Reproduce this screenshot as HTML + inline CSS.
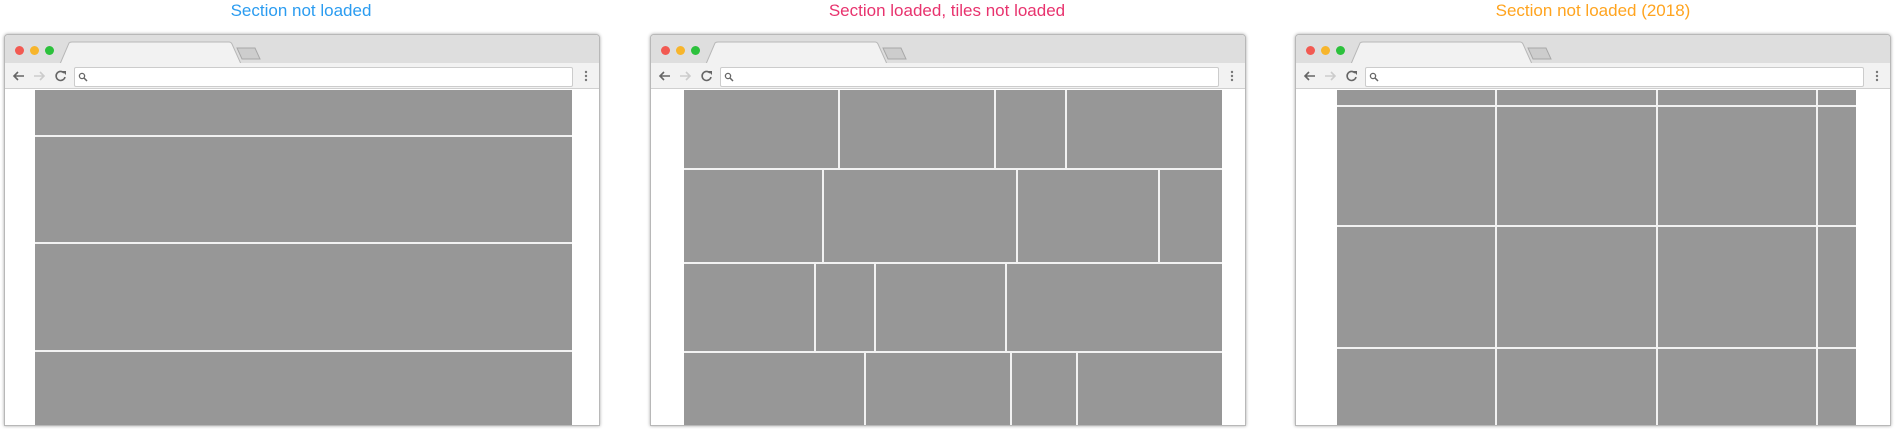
<!DOCTYPE html>
<html><head><meta charset="utf-8"><style>
body{margin:0;width:1896px;height:429px;background:#fff;position:relative;overflow:hidden;font-family:"Liberation Sans",sans-serif}
.t{position:absolute;top:0;font-size:17px;line-height:22px;text-align:center;width:400px}
.w{position:absolute;top:34px;width:594px;height:390px;border:1px solid #b8b8b8;border-radius:4px 4px 0 0;box-shadow:0 0 3px rgba(0,0,0,.35);background:#fff;overflow:hidden}
.tb{position:absolute;left:0;top:0;width:100%;height:28px;background:#dedede;border-bottom:1px solid #c6c6c6}
.tl{position:absolute;top:28px;left:0;width:100%;height:25px;background:#f2f2f2;border-bottom:1px solid #d0d0d0}
.url{position:absolute;left:69px;top:4px;width:497px;height:18px;background:#fff;border:1px solid #ccc;border-radius:2px}
.d{position:absolute;width:9px;height:9px;border-radius:50%;top:11px}
.g{position:absolute;background:#979797}
.h{position:absolute;height:2px;background:#f2f2f2}
.v{position:absolute;width:2px;background:#f2f2f2}
</style></head><body>
<div class="t" style="left:101px;color:#2b9cf0">Section not loaded</div>
<div class="t" style="left:747px;color:#e8336e">Section loaded, tiles not loaded</div>
<div class="t" style="left:1393px;color:#ffa41f">Section not loaded (2018)</div>

<div class="w" style="left:4px">
 <div class="tb"></div>
 <svg style="position:absolute;left:0;top:0" width="300" height="30"><path d="M55 29 L64 8 Q65 7 67 7 L224 7 Q226 7 227 9 L236 29" fill="#f2f2f2" stroke="#b8b8b8"/><path d="M232 13 L250 13 L255 24 L237 24 Z" fill="#cdcdcd" stroke="#a8a8a8"/></svg>
 <div class="d" style="left:10px;background:#f25a52"></div><div class="d" style="left:25px;background:#f7b52c"></div><div class="d" style="left:40px;background:#2cc13c"></div>
 <div class="tl"><svg style="position:absolute;left:0;top:0" width="70" height="25"><g fill="none" stroke-width="1.6"><path d="M9 13h10M13 9l-4 4 4 4" stroke="#666"/><path d="M29 13h10M35 9l4 4-4 4" stroke="#ccc"/><path d="M59 10a4.5 4.5 0 1 0 1 4" stroke="#666"/></g><path d="M57 8l4 0 0 4z" fill="#666"/></svg>
 <div class="url"><svg width="14" height="18"><circle cx="7" cy="8" r="2.6" fill="none" stroke="#666" stroke-width="1.3"/><path d="M9 10l3 3" stroke="#666" stroke-width="1.5"/></svg></div>
 <svg style="position:absolute;left:578px;top:6px" width="6" height="14"><circle cx="3" cy="3" r="1.2" fill="#777"/><circle cx="3" cy="7" r="1.2" fill="#777"/><circle cx="3" cy="11" r="1.2" fill="#777"/></svg></div>
</div>
<div class="w" style="left:650px">
 <div class="tb"></div>
 <svg style="position:absolute;left:0;top:0" width="300" height="30"><path d="M55 29 L64 8 Q65 7 67 7 L224 7 Q226 7 227 9 L236 29" fill="#f2f2f2" stroke="#b8b8b8"/><path d="M232 13 L250 13 L255 24 L237 24 Z" fill="#cdcdcd" stroke="#a8a8a8"/></svg>
 <div class="d" style="left:10px;background:#f25a52"></div><div class="d" style="left:25px;background:#f7b52c"></div><div class="d" style="left:40px;background:#2cc13c"></div>
 <div class="tl"><svg style="position:absolute;left:0;top:0" width="70" height="25"><g fill="none" stroke-width="1.6"><path d="M9 13h10M13 9l-4 4 4 4" stroke="#666"/><path d="M29 13h10M35 9l4 4-4 4" stroke="#ccc"/><path d="M59 10a4.5 4.5 0 1 0 1 4" stroke="#666"/></g><path d="M57 8l4 0 0 4z" fill="#666"/></svg>
 <div class="url"><svg width="14" height="18"><circle cx="7" cy="8" r="2.6" fill="none" stroke="#666" stroke-width="1.3"/><path d="M9 10l3 3" stroke="#666" stroke-width="1.5"/></svg></div>
 <svg style="position:absolute;left:578px;top:6px" width="6" height="14"><circle cx="3" cy="3" r="1.2" fill="#777"/><circle cx="3" cy="7" r="1.2" fill="#777"/><circle cx="3" cy="11" r="1.2" fill="#777"/></svg></div>
</div>
<div class="w" style="left:1295px">
 <div class="tb"></div>
 <svg style="position:absolute;left:0;top:0" width="300" height="30"><path d="M55 29 L64 8 Q65 7 67 7 L224 7 Q226 7 227 9 L236 29" fill="#f2f2f2" stroke="#b8b8b8"/><path d="M232 13 L250 13 L255 24 L237 24 Z" fill="#cdcdcd" stroke="#a8a8a8"/></svg>
 <div class="d" style="left:10px;background:#f25a52"></div><div class="d" style="left:25px;background:#f7b52c"></div><div class="d" style="left:40px;background:#2cc13c"></div>
 <div class="tl"><svg style="position:absolute;left:0;top:0" width="70" height="25"><g fill="none" stroke-width="1.6"><path d="M9 13h10M13 9l-4 4 4 4" stroke="#666"/><path d="M29 13h10M35 9l4 4-4 4" stroke="#ccc"/><path d="M59 10a4.5 4.5 0 1 0 1 4" stroke="#666"/></g><path d="M57 8l4 0 0 4z" fill="#666"/></svg>
 <div class="url"><svg width="14" height="18"><circle cx="7" cy="8" r="2.6" fill="none" stroke="#666" stroke-width="1.3"/><path d="M9 10l3 3" stroke="#666" stroke-width="1.5"/></svg></div>
 <svg style="position:absolute;left:578px;top:6px" width="6" height="14"><circle cx="3" cy="3" r="1.2" fill="#777"/><circle cx="3" cy="7" r="1.2" fill="#777"/><circle cx="3" cy="11" r="1.2" fill="#777"/></svg></div>
</div>

<div class="g" style="left:35px;top:90px;width:537px;height:335px"></div>
<div class="h" style="left:35px;width:537px;top:135px"></div>
<div class="h" style="left:35px;width:537px;top:242px"></div>
<div class="h" style="left:35px;width:537px;top:350px"></div>

<div class="g" style="left:684px;top:90px;width:538px;height:335px"></div>
<div class="h" style="left:684px;width:538px;top:168px"></div>
<div class="h" style="left:684px;width:538px;top:262px"></div>
<div class="h" style="left:684px;width:538px;top:351px"></div>
<div class="v" style="left:838px;top:90px;height:78px"></div>
<div class="v" style="left:994px;top:90px;height:78px"></div>
<div class="v" style="left:1065px;top:90px;height:78px"></div>
<div class="v" style="left:822px;top:170px;height:92px"></div>
<div class="v" style="left:1016px;top:170px;height:92px"></div>
<div class="v" style="left:1158px;top:170px;height:92px"></div>
<div class="v" style="left:814px;top:264px;height:87px"></div>
<div class="v" style="left:874px;top:264px;height:87px"></div>
<div class="v" style="left:1005px;top:264px;height:87px"></div>
<div class="v" style="left:864px;top:353px;height:72px"></div>
<div class="v" style="left:1010px;top:353px;height:72px"></div>
<div class="v" style="left:1076px;top:353px;height:72px"></div>

<div class="g" style="left:1337px;top:90px;width:519px;height:335px"></div>
<div class="h" style="left:1337px;width:519px;top:105px"></div>
<div class="h" style="left:1337px;width:519px;top:225px"></div>
<div class="h" style="left:1337px;width:519px;top:347px"></div>
<div class="v" style="left:1495px;top:90px;height:335px"></div>
<div class="v" style="left:1656px;top:90px;height:335px"></div>
<div class="v" style="left:1816px;top:90px;height:335px"></div>
</body></html>
